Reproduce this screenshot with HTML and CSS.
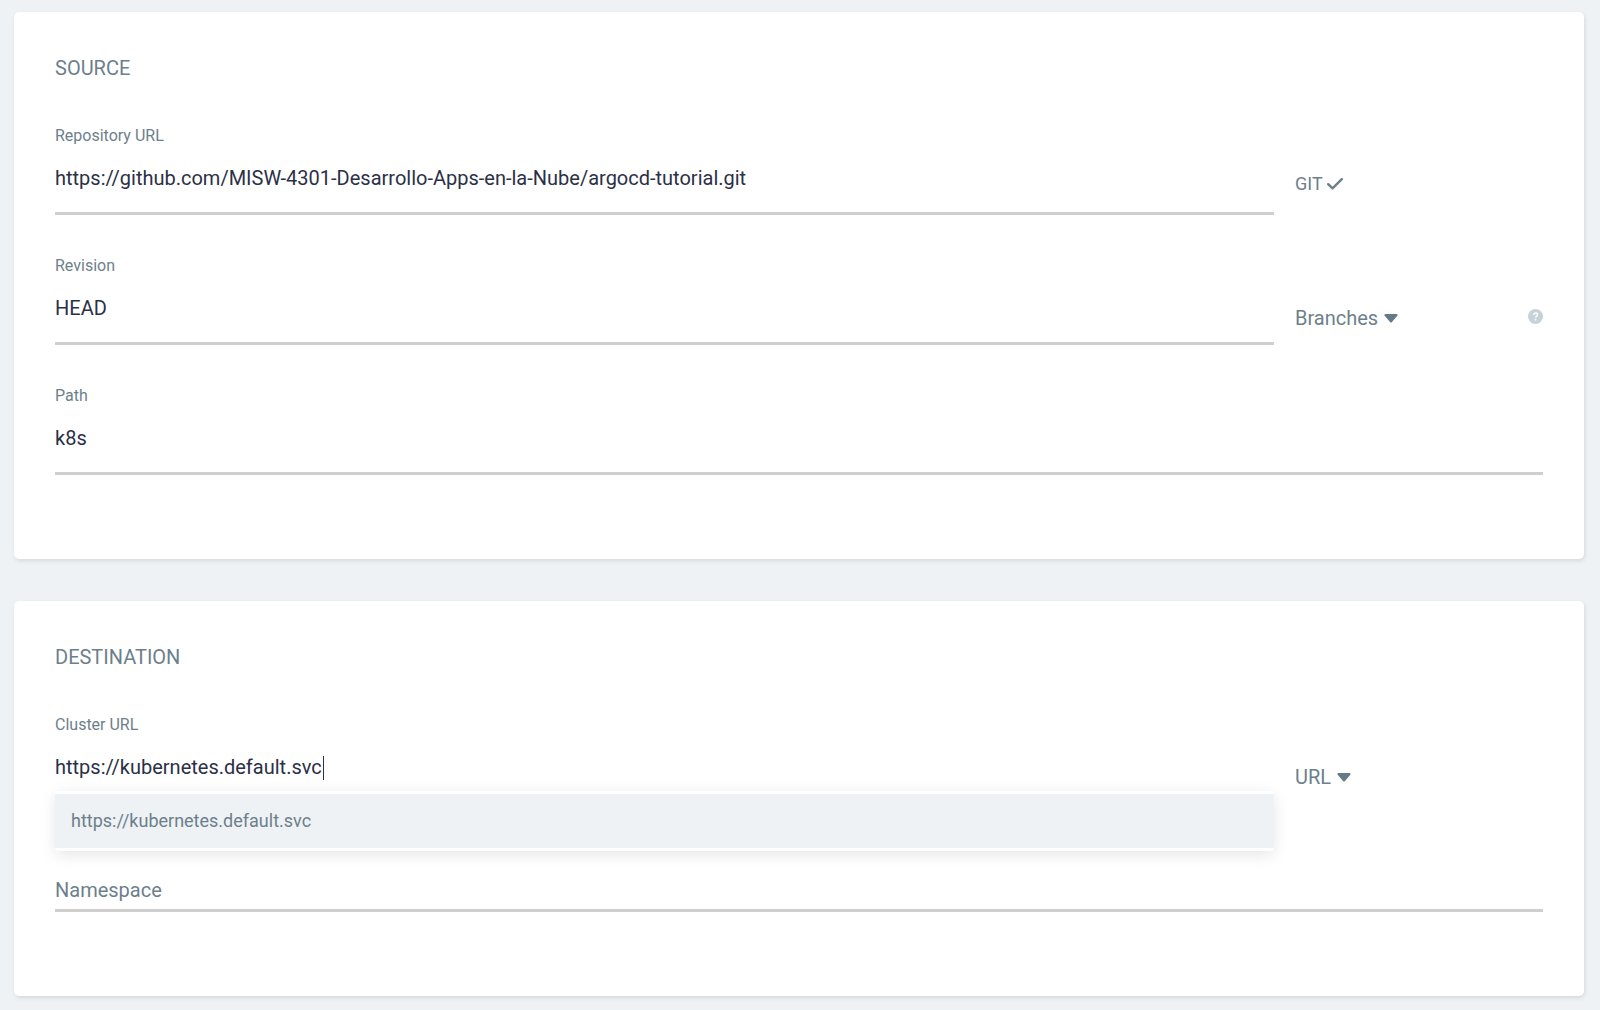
FILE: index.html
```html
<!DOCTYPE html>
<html lang="en">
<head>
    <meta charset="UTF-8">
    <meta name="viewport" content="width=device-width, initial-scale=1.0">
    <title>New application</title>
    <link rel="stylesheet" href="styles.css">
</head>
<body>
    <form class="app-form">
        <section class="panel">
            <h2 class="panel-title">SOURCE</h2>

            <div class="row">
                <div class="field">
                    <label for="repoUrl">Repository URL</label>
                    <input type="text" id="repoUrl" value="https://github.com/MISW-4301-Desarrollo-Apps-en-la-Nube/argocd-tutorial.git" spellcheck="false">
                </div>
                <div class="side repo-type">
                    <span>GIT</span>
                    <svg class="check" viewBox="0 0 16 12"><path d="M1.2 6.2l4.3 4.2L14.8 1.2"/></svg>
                </div>
            </div>

            <div class="row">
                <div class="field">
                    <label for="revision">Revision</label>
                    <input type="text" id="revision" value="HEAD">
                </div>
                <div class="side">
                    <select class="picker" aria-label="Revision type">
                        <option>Branches</option>
                        <option>Tags</option>
                    </select>
                    <svg class="arrow" viewBox="0 0 14 9"><path d="M1.5 0h11c1 0 1.4 1 .8 1.7L8 7.9c-.6.7-1.4.7-2 0L.7 1.7C.1 1 .5 0 1.5 0z"/></svg>
                    <svg class="help" viewBox="0 0 16 16">
                        <circle cx="8" cy="8" r="8"/>
                        <path d="M5.9 6.3c.2-1.3 1-2 2.2-2 1.2 0 2.1.7 2.1 1.7 0 1.5-2 1.500-2 3M8.1 10.6v1.700"/>
                    </svg>
                </div>
            </div>

            <div class="field">
                <label for="path">Path</label>
                <input type="text" id="path" value="k8s">
            </div>
        </section>

        <section class="panel">
            <h2 class="panel-title">DESTINATION</h2>

            <div class="row">
                <div class="field">
                    <label for="clusterUrl">Cluster URL</label>
                    <input type="text" id="clusterUrl" value="https://kubernetes.default.svc" spellcheck="false">
                    <span class="cursor"></span>
                    <div class="suggestions">
                        <button type="button" class="suggestion">https://kubernetes.default.svc</button>
                    </div>
                </div>
                <div class="side">
                    <select class="picker" aria-label="Cluster type">
                        <option>URL</option>
                        <option>NAME</option>
                    </select>
                    <svg class="arrow" viewBox="0 0 14 9"><path d="M1.5 0h11c1 0 1.4 1 .8 1.7L8 7.9c-.6.7-1.4.7-2 0L.7 1.7C.1 1 .5 0 1.5 0z"/></svg>
                </div>
            </div>

            <div class="field field-empty">
                <input type="text" id="namespace" placeholder="Namespace" aria-label="Namespace">
            </div>
        </section>
    </form>
</body>
</html>
```
FILE: styles.css
```css
* {
    box-sizing: border-box;
    margin: 0;
    padding: 0;
}

body {
    font-family: Roboto, sans-serif;
    font-size: 20px;
    line-height: 24px;
    color: #6d7f8b;
    background: #eef2f5;
}

.app-form {
    display: flex;
    flex-direction: column;
    gap: 42px;
    padding: 12px 16px 13px 14px;
}

.panel {
    display: flex;
    flex-direction: column;
    gap: 39px;
    padding: 41px 41px 84px;
    background: #fff;
    border-radius: 5px;
    box-shadow: 1px 2px 4px rgba(0, 0, 0, 0.1);
}

.panel-title {
    margin-bottom: 2px;
    font-size: 20px;
    font-weight: 400;
    line-height: 30px;
}

.row {
    display: grid;
    grid-template-columns: 1fr 248px;
    gap: 21px;
}

.field {
    position: relative;
}

.field label {
    display: block;
    font-size: 16px;
    line-height: 24px;
}

.field input {
    display: block;
    width: 100%;
    height: 67px;
    padding: 18px 0 22px;
    font: inherit;
    color: #2b3047;
    background: transparent;
    border: none;
    border-bottom: 3px solid #cfcfcf;
    outline: none;
}

.field-empty input {
    height: 69px;
    padding: 35px 0 7px;
}

.field input::placeholder {
    color: #6d7f8b;
    opacity: 1;
}

/* text cursor at the end of the cluster url */
.cursor {
    position: absolute;
    top: 43px;
    left: 268px;
    width: 1px;
    height: 24px;
    background: #2b3047;
}

.suggestions {
    position: absolute;
    top: 78px;
    left: 0;
    z-index: 1;
    width: 100%;
    padding: 3px 0;
    background: #fff;
    border-radius: 4px;
    box-shadow: 0 4px 16px rgba(0, 0, 0, 0.1);
}

.suggestion {
    display: block;
    width: 100%;
    padding: 15px 16px;
    font: inherit;
    font-size: 18px;
    line-height: 24px;
    text-align: left;
    color: #6d7f8b;
    background: #eef2f5;
    border: none;
    cursor: pointer;
}

.side {
    display: flex;
    align-items: center;
    align-self: start;
    gap: 6px;
    padding-top: 52px;
}

.repo-type {
    gap: 4px;
    padding-top: 48px;
    font-size: 18px;
}

.picker {
    field-sizing: content;
    font: inherit;
    color: inherit;
    background: none;
    border: none;
    appearance: none;
    cursor: pointer;
}

.check {
    width: 16px;
    height: 12px;
    fill: none;
    stroke: #6d7f8b;
    stroke-width: 2.4;
    stroke-linecap: round;
    stroke-linejoin: round;
}

.arrow {
    width: 14px;
    height: 9px;
    fill: #637b88;
}

.help {
    width: 15px;
    height: 15px;
    margin: 0 0 4px auto;
    fill: #c6d2da;
}

.help path {
    fill: none;
    stroke: #fff;
    stroke-width: 1.6;
}
```
